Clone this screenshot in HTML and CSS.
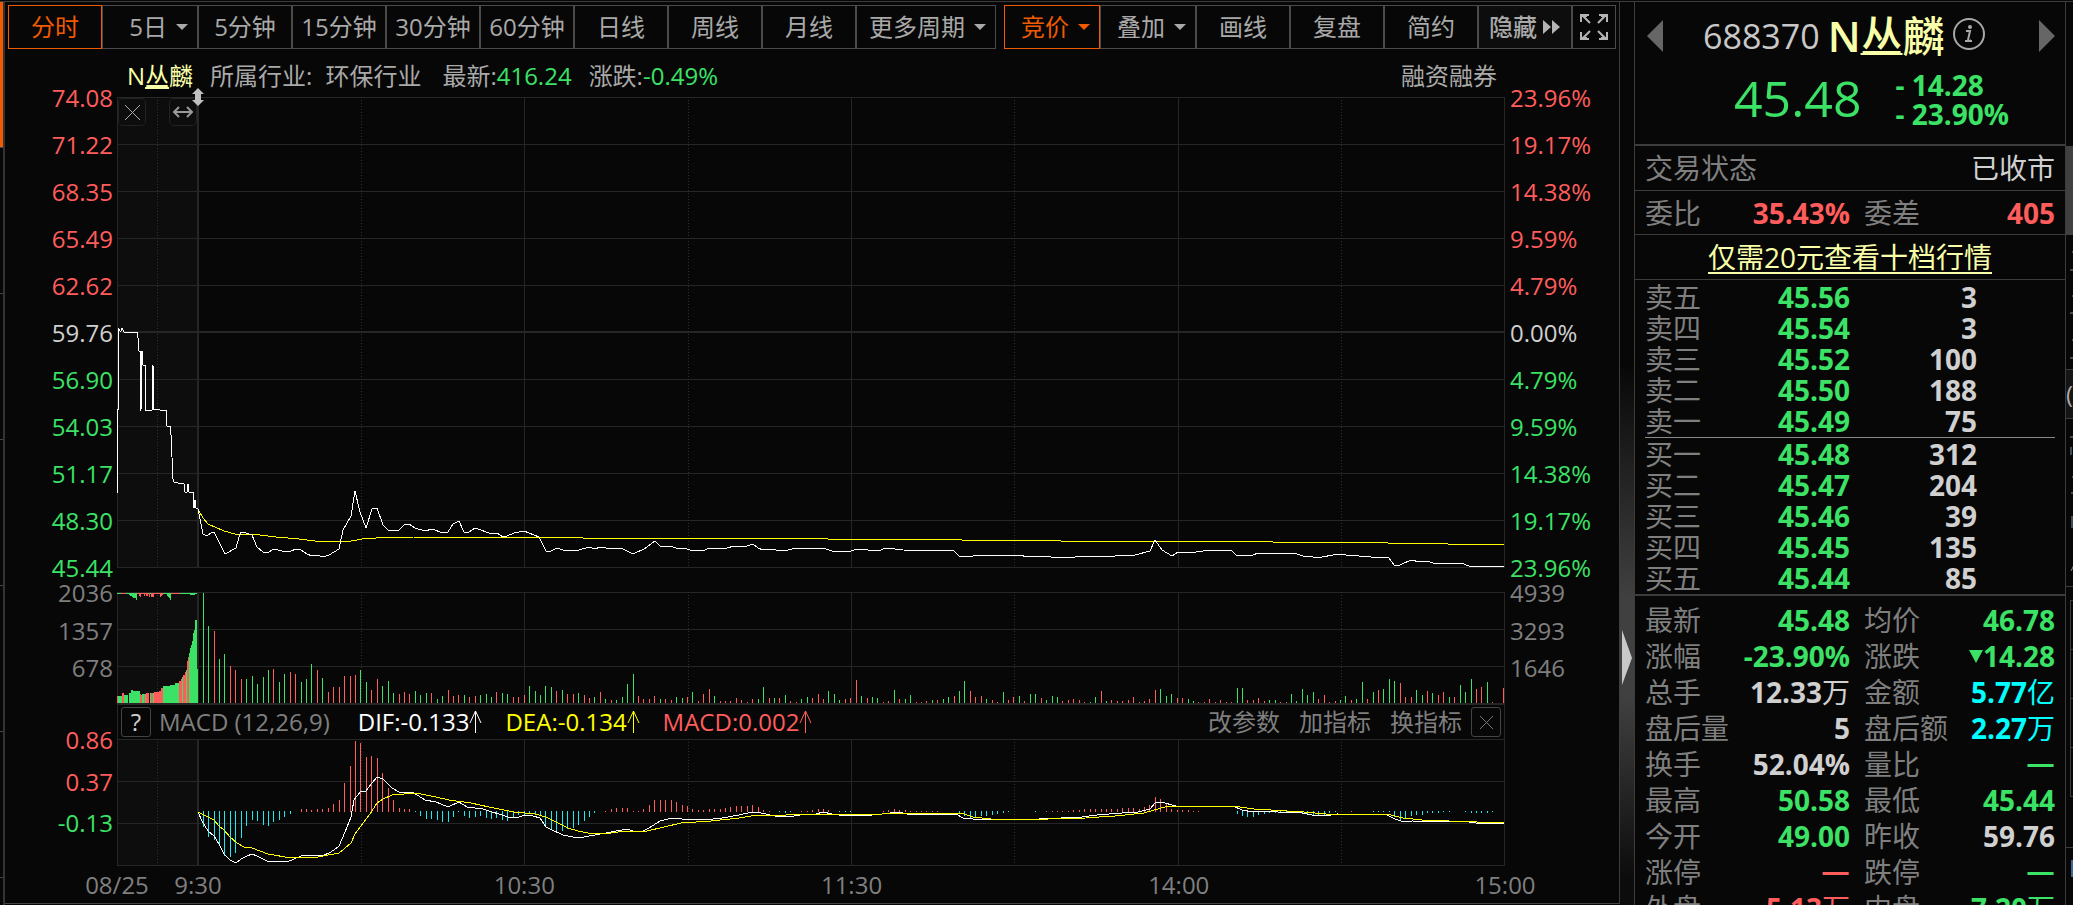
FILE: index.html
```html
<!DOCTYPE html>
<html lang="zh-CN">
<head>
  <meta charset="UTF-8">
  <meta name="viewport" content="width=device-width, initial-scale=1.0">
  <title>N丛麟 688370 分时</title>
  <link rel="stylesheet" href="styles.css">
</head>
<body>

<div class="app">
  <div class="nav-strip">
    <span class="active"></span><span></span><span></span><span></span><span></span><span></span><span></span>
  </div>

  <main class="main">
    <div class="toolbar">
      <button class="btn active">分时</button>
      <button class="btn btn-menu">5日<i class="caret"></i></button>
      <button class="btn">5分钟</button>
      <button class="btn">15分钟</button>
      <button class="btn">30分钟</button>
      <button class="btn">60分钟</button>
      <button class="btn">日线</button>
      <button class="btn">周线</button>
      <button class="btn">月线</button>
      <button class="btn btn-menu btn-wide">更多周期<i class="caret"></i></button>
      <button class="btn btn-menu btn-split active">竞价<i class="caret"></i></button>
      <button class="btn btn-menu">叠加<i class="caret"></i></button>
      <button class="btn">画线</button>
      <button class="btn">复盘</button>
      <button class="btn">简约</button>
      <button class="btn btn-hide">隐藏
        <svg width="18" height="14" viewBox="0 0 18 14"><path d="M0 0l8 7-8 7zM9 0l8 7-8 7z" fill="#b4b4b4"/></svg>
      </button>
      <button class="btn btn-icon" aria-label="全屏">
        <svg width="28" height="28" viewBox="0 0 28 28" fill="none" stroke="#b4b4b4" stroke-width="2">
          <path d="M1 9V2h8M2 2l8 8M19 2h8v7M26 2l-8 8M1 19v7h8M2 26l8-8M27 19v7h-8M26 26l-8-8"/>
          <path d="M1 3h6M21 3h6M1 25h6M21 25h6"/>
        </svg>
      </button>
    </div>

    <div class="info">
      <span class="info-name">N<u>丛</u>麟</span>
      <span>所属行业:</span>
      <span class="info-sector">环保行业</span>
      <span>最新:<b class="down">416.24</b></span>
      <span>涨跌:<b class="down">-0.49%</b></span>
      <span class="info-tag">融资融券</span>
    </div>

    <div class="chart">
      <div class="axis axis-left">
        <span class="up">74.08</span><span class="up">71.22</span><span class="up">68.35</span><span class="up">65.49</span><span class="up">62.62</span><span class="flat">59.76</span><span class="down">56.90</span><span class="down">54.03</span><span class="down">51.17</span><span class="down">48.30</span><span class="down">45.44</span>
      </div>
      <div class="plot">
        <svg id="price" viewBox="0 0 1388 471" preserveAspectRatio="none"></svg>
        <button class="tool tool-close" aria-label="关闭竞价">
          <svg width="17" height="17" viewBox="0 0 17 17"><path d="M1 1l15 15M16 1L1 16" stroke="#aaa"/></svg>
        </button>
        <button class="tool tool-width" aria-label="调整宽度">
          <svg width="22" height="12" viewBox="0 0 22 12" fill="none" stroke="#999" stroke-width="2"><path d="M2 6h18M7 1L2 6l5 5M15 1l5 5-5 5"/></svg>
        </button>
        <svg class="drag" width="12" height="18" viewBox="0 0 12 18"><path d="M6 0l6 6H9v6h3l-6 6-6-6h3V6H0z"/></svg>
      </div>
      <div class="axis axis-right">
        <span class="up">23.96%</span><span class="up">19.17%</span><span class="up">14.38%</span><span class="up">9.59%</span><span class="up">4.79%</span><span class="flat">0.00%</span><span class="down">4.79%</span><span class="down">9.59%</span><span class="down">14.38%</span><span class="down">19.17%</span><span class="down">23.96%</span>
      </div>

      <div class="axis axis-left axis-volume"><span>2036</span><span>1357</span><span>678</span></div>
      <div class="plot plot-volume"><svg id="volume" viewBox="0 0 1388 113" preserveAspectRatio="none"></svg></div>
      <div class="axis axis-right axis-volume"><span>4939</span><span>3293</span><span>1646</span></div>

      <div class="indicator">
        <button class="box" aria-label="指标说明">?</button>
        <span class="ind-name">MACD (12,26,9)</span>
        <span class="ind-value dif">DIF:-0.133<svg width="13" height="24" viewBox="0 0 13 24"><path d="M6.500 1v22M6.500 1L1 13M6.500 1L12 13"/></svg></span>
        <span class="ind-value dea">DEA:-0.134<svg width="13" height="24" viewBox="0 0 13 24"><path d="M6.500 1v22M6.500 1L1 13M6.500 1L12 13"/></svg></span>
        <span class="ind-value macd">MACD:0.002<svg width="13" height="24" viewBox="0 0 13 24"><path d="M6.500 1v22M6.500 1L1 13M6.500 1L12 13"/></svg></span>
        <div class="ind-actions">
          <button>改参数</button>
          <button>加指标</button>
          <button>换指标</button>
        </div>
        <button class="box" aria-label="关闭指标">
          <svg width="15" height="15" viewBox="0 0 15 15"><path d="M1 1l13 13M14 1L1 14" stroke="#777"/></svg>
        </button>
      </div>

      <div class="axis axis-left axis-macd"><span class="up">0.86</span><span class="up">0.37</span><span class="down">-0.13</span></div>
      <div class="plot plot-macd"><svg id="macd" viewBox="0 0 1388 127" preserveAspectRatio="none"></svg></div>

      <div class="times">
        <span>08/25</span><span>9:30</span><span>10:30</span><span>11:30</span><span>14:00</span><span>15:00</span>
      </div>
    </div>
  </main>

  <div class="splitter">
    <svg width="10" height="55" viewBox="0 0 10 55"><path d="M0 0l10 28L0 55z" fill="#c8c8c8"/></svg>
  </div>

  <aside class="side">
    <header class="quote">
      <div class="quote-title">
        <button class="step" aria-label="上一只"><svg width="16" height="32" viewBox="0 0 16 32"><path d="M16 0v32L0 16z"/></svg></button>
        <span class="code">688370</span>
        <span class="name"><b>N</b><u>丛</u>麟</span>
        <svg class="info-icon" width="32" height="32" viewBox="0 0 32 32" fill="none" stroke="#a8a8a8">
          <circle cx="16" cy="16" r="15" stroke-width="2"/>
          <path d="M13 13h4l-2 9q0 2 3 0M12 23h7" stroke-width="2"/>
          <circle cx="17" cy="9" r="1" stroke-width="2"/>
        </svg>
        <button class="step step-next" aria-label="下一只"><svg width="16" height="32" viewBox="0 0 16 32"><path d="M0 0v32l16-16z"/></svg></button>
      </div>
      <div class="quote-price down">
        <span class="last">45.48</span>
        <span class="change"><span>- 14.28</span><span>- 23.90%</span></span>
      </div>
    </header>

    <div class="line"><span>交易状态</span><span class="status">已收市</span></div>
    <table class="stats ratio">
      <tr><th>委比</th><td class="up">35.43%</td><th>委差</th><td class="up">405</td></tr>
    </table>
    <div class="line promo"><a href="#">仅需20元查看十档行情</a></div>

    <table class="book">
      <tbody>
        <tr><th>卖五</th><td class="down">45.56</td><td>3</td><td></td></tr>
        <tr><th>卖四</th><td class="down">45.54</td><td>3</td><td></td></tr>
        <tr><th>卖三</th><td class="down">45.52</td><td>100</td><td></td></tr>
        <tr><th>卖二</th><td class="down">45.50</td><td>188</td><td></td></tr>
        <tr><th>卖一</th><td class="down">45.49</td><td>75</td><td></td></tr>
      </tbody>
    </table>
    <div class="book-buy">
      <table class="book">
        <tbody>
          <tr><th>买一</th><td class="down">45.48</td><td>312</td><td></td></tr>
          <tr><th>买二</th><td class="down">45.47</td><td>204</td><td></td></tr>
          <tr><th>买三</th><td class="down">45.46</td><td>39</td><td></td></tr>
          <tr><th>买四</th><td class="down">45.45</td><td>135</td><td></td></tr>
          <tr><th>买五</th><td class="down">45.44</td><td>85</td><td></td></tr>
        </tbody>
      </table>
    </div>

    <div class="detail">
      <table class="stats">
        <tr><th>最新</th><td class="down">45.48</td><th>均价</th><td class="down">46.78</td></tr>
        <tr><th>涨幅</th><td class="down">-23.90%</td><th>涨跌</th><td class="down"><i class="fall"></i>14.28</td></tr>
        <tr><th>总手</th><td>12.33<em>万</em></td><th>金额</th><td class="money">5.77<em>亿</em></td></tr>
        <tr><th>盘后量</th><td>5</td><th>盘后额</th><td class="money">2.27<em>万</em></td></tr>
        <tr><th>换手</th><td>52.04%</td><th>量比</th><td class="down"><em class="dash">—</em></td></tr>
        <tr><th>最高</th><td class="down">50.58</td><th>最低</th><td class="down">45.44</td></tr>
        <tr><th>今开</th><td class="down">49.00</td><th>昨收</th><td>59.76</td></tr>
        <tr><th>涨停</th><td class="up"><em class="dash">—</em></td><th>跌停</th><td class="down"><em class="dash">—</em></td></tr>
        <tr><th>外盘</th><td class="up">5.13<em>万</em></td><th>内盘</th><td class="down">7.20<em>万</em></td></tr>
      </table>
    </div>
  </aside>

  <div class="edge">
    <div class="thumb"></div>
    <div class="edge-list">
      <svg width="4" height="134" viewBox="0 0 4 134" stroke="#7d8ea3" fill="none"><path d="M2 17h2M0 35h4M2 61h2M0 78h4M2 105h2M0 123h4"/></svg>
    </div>
    <div class="edge-tab">(</div>
    <div class="edge-list edge-more">
      <svg width="4" height="167" viewBox="0 0 4 167" stroke="#7d8ea3" fill="none"><path d="M0 18h4M1 28v8M2 58h2M1 74h3M2 97v12M4 146l-3 6"/></svg>
    </div>
    <div class="edge-cells"><span></span><span></span><span></span><span></span></div>
    <div class="edge-foot"></div>
  </div>
</div>

<script src="chart.js"></script>
</body>
</html>
```
FILE: styles.css
```css
* {
  box-sizing: border-box;
}

body {
  margin: 0;
  background: #070707;
  color: #a9a9a9;
  font-family: "Open Sans", "Noto Sans CJK SC", sans-serif;
  font-size: 24px;
  line-height: 30px;
  overflow: hidden;
}

button {
  padding: 0;
  border: 0;
  background: none;
  color: inherit;
  font: inherit;
  cursor: pointer;
}

svg {
  display: block;
}

.up { color: #ff5c5c; }
.down { color: #3be266; }
.flat { color: #d0d0d0; }

.app {
  display: flex;
  height: calc(100vh - 1px);
  margin-top: 1px;
  border-top: 1px solid #3c3c3c;
}

/* left tabs, collapsed */
.nav-strip {
  display: flex;
  flex-direction: column;
  flex: none;
  width: 5px;
  overflow: hidden;
  border-right: 2px solid #333;
}

.nav-strip span {
  flex: none;
  height: 146px;
  border-bottom: 1px solid #444;
}

.nav-strip .active {
  background: #f05a00;
}

.main {
  display: flex;
  flex-direction: column;
  flex: 1;
  min-width: 0;
  margin-bottom: 1px;
  border-right: 1px solid #3c3c3c;
  border-bottom: 1px solid #444;
}

/* toolbar */
.toolbar {
  display: flex;
  flex: none;
  padding: 3px 3px 0;
}

.btn {
  display: flex;
  align-items: center;
  justify-content: center;
  flex: none;
  width: 94px;
  height: 44px;
  border: 1px solid #4a4a4a;
  white-space: nowrap;
}

.btn.active {
  border-color: #f05a00;
  color: #f05a00;
}

.btn-menu {
  justify-content: flex-end;
  width: 96px;
  padding-right: 9px;
}

.btn-wide { width: 140px; }
.btn-split { margin-left: 8px; }
.btn-icon { width: 44px; }

.btn-hide {
  gap: 6px;
  background: #0d0d0d;
  font-weight: 500;
}

.caret {
  margin-left: 9px;
  border: 6px solid transparent;
  border-top: 6px solid currentColor;
  border-bottom: 0;
}

.info {
  display: flex;
  flex: none;
  gap: 17px;
  height: 48px;
  padding: 12px 122px 0 122px;
  white-space: nowrap;
}

.info b {
  font-weight: 400;
}

.info-name { color: #f8ffa8; }
.info-sector { margin-left: -4px; margin-right: 4px; }
.info-tag { margin-left: auto; }

/* chart */
.chart {
  display: grid;
  flex: 1;
  grid-template-columns: 112px 1fr 114px;
  grid-template-rows: minmax(200px, 1fr) 24px 113px 34px 127px 37px;
}

.axis {
  display: flex;
  flex-direction: column;
  justify-content: space-between;
  margin: -11px 0 -12px;
  color: #7f7f7f;
  line-height: 24px;
}

.axis-left {
  grid-column: 1;
  padding-right: 4px;
  text-align: right;
}

.axis-right {
  grid-column: 3;
  padding-left: 5px;
}

.axis-volume {
  grid-row: 3;
  margin-bottom: 25px;
}

.axis-macd {
  grid-row: 5;
  margin-bottom: 31px;
}

.plot {
  grid-column: 2;
  position: relative;
  min-height: 0;
}

.plot > svg:first-child {
  width: 100%;
  height: 100%;
}

.plot-volume { grid-row: 3; }
.plot-macd { grid-row: 5; }

.plot path {
  fill: none;
  shape-rendering: crispEdges;
  vector-effect: non-scaling-stroke;
}

.plot .tool path,
.plot .drag path {
  shape-rendering: auto;
}

.plot .drag path { fill: #c0c0c0; }

.g-auction { fill: #0d0d0d; }
.g-line { stroke: #262626; }
.g-bold { stroke: #262626; stroke-width: 2; }
.g-dot { stroke: #303030; stroke-dasharray: 1 2; }
.s-white { stroke: #fff; }
.s-yellow { stroke: #ff0; }
.s-up { stroke: #ff5c5c; }
.s-down { stroke: #3be266; }
.s-cyan { stroke: #1fe9f0; }

.tool {
  position: absolute;
  top: 1px;
  display: flex;
  align-items: center;
  justify-content: center;
  width: 28px;
  height: 28px;
  border: 1px solid #222;
  border-radius: 5px;
}

.tool-close { left: 1px; }
.tool-width { left: 52px; }

.drag {
  position: absolute;
  top: -9px;
  left: 75px;
}

.indicator {
  grid-column: 2;
  grid-row: 4;
  display: flex;
  align-items: center;
  padding: 0 3px;
  border: 1px solid #262626;
  border-width: 0 1px;
  white-space: nowrap;
}

.box {
  display: flex;
  align-items: center;
  justify-content: center;
  flex: none;
  width: 30px;
  height: 30px;
  border: 1px solid #444;
  border-radius: 3px;
  color: #d0d0d0;
}

.ind-name {
  margin: 0 28px 0 8px;
  color: #7f7f7f;
}

.ind-value {
  display: flex;
  align-items: center;
  margin-right: 23px;
}

.ind-value path {
  fill: none;
  stroke: currentColor;
}

.dif { color: #fff; }
.dea { color: #ff0; }
.macd { color: #ff5c5c; }

.ind-actions {
  display: flex;
  gap: 19px;
  margin: 0 9px 0 auto;
  color: #7f7f7f;
}

.times {
  grid-column: 2;
  grid-row: 6;
  display: grid;
  grid-template-columns: 81fr 326fr 327fr 327fr 326fr 0;
  align-items: center;
  color: #7f7f7f;
}

/* each label is centred on the start of its column */
.times span {
  width: 80px;
  margin-left: -40px;
  text-align: center;
}

.splitter {
  flex: none;
  width: 14px;
  padding: 628px 0 0 2px;
  background: linear-gradient(#070707 40%, #404040 66%, #404040 77%, #0c0c0c 97%);
}

/* quote panel */
.side {
  flex: none;
  width: 432px;
  overflow: hidden;
  border: 1px solid #3c3c3c;
  border-width: 0 1px;
  font-size: 28px;
}

.quote {
  height: 144px;
  border-bottom: 2px solid #3c3c3c;
}

.quote-title {
  display: flex;
  align-items: center;
  height: 66px;
  padding: 2px 10px 0 12px;
}

.step path { fill: #666; }
.step-next { margin-left: auto; }

.code {
  margin-left: 40px;
  color: #c8c8c8;
  font-size: 34px;
}

.name {
  margin-left: 8px;
  color: #f8ffa8;
  font-size: 42px;
  font-weight: 500;
}

.name b {
  font-weight: 600;
}

.name u {
  text-decoration-thickness: 2px;
}

.info-icon { margin: -4px 0 0 8px; }

.quote-price {
  display: flex;
  align-items: center;
  height: 64px;
  padding-left: 99px;
}

.last {
  padding-bottom: 4px;
  font-size: 50px;
  font-weight: 500;
}

.change {
  display: flex;
  flex-direction: column;
  margin-left: 34px;
  font-weight: 700;
  line-height: 29px;
}

.line {
  display: flex;
  align-items: center;
  justify-content: space-between;
  height: 45px;
  padding: 0 10px;
  border-bottom: 1px solid #3c3c3c;
  color: #7f7f7f;
}

.status { color: #d0d0d0; }

.promo {
  justify-content: center;
}

.promo a {
  color: #f8ffa8;
  text-underline-offset: 4px;
  text-decoration-thickness: 2px;
}

table {
  width: 100%;
  border-collapse: collapse;
  table-layout: fixed;
}

th, td {
  padding: 0;
  white-space: nowrap;
}

th {
  color: #7f7f7f;
  font-weight: 400;
  text-align: left;
}

td {
  font-weight: 700;
  text-align: right;
}

td:not([class]) { color: #d0d0d0; }
td.money { color: #0ff; }

td em {
  font-style: normal;
  font-weight: 400;
}

td .dash {
  font-family: "Noto Sans CJK SC", sans-serif;
  font-size: 32px;
  font-weight: 700;
  line-height: 28px;
}

.stats th:nth-child(1) { width: 21%; }
.stats td:nth-child(2) { width: 29%; }
.stats th:nth-child(3) { width: 24%; padding-left: 14px; }

.ratio {
  border-collapse: separate;
  border-spacing: 0;
  height: 44px;
  padding: 0 10px;
  border-bottom: 1px solid #3c3c3c;
}

.book {
  width: calc(100% - 20px);
  margin: 2px 10px 0;
  line-height: 31px;
}

.book th { width: 21%; }
.book td:nth-child(2) { width: 29%; }
.book td:nth-child(3) { width: 31%; }

.book-buy {
  margin: 0 10px;
  border-top: 1px solid #888;
}

.book-buy .book {
  width: 100%;
  margin: 1px 0 0;
}

.detail {
  padding: 6px 10px 0;
  border-top: 2px solid #3c3c3c;
  line-height: 36px;
}

.detail tr {
  height: 36px;
}

.fall {
  display: inline-block;
  border: 7px solid transparent;
  border-top: 13px solid currentColor;
  border-bottom: 0;
  vertical-align: 4px;
}

/* right edge, next panel cut off by the window */
.edge {
  flex: none;
  width: 7px;
  overflow: hidden;
}

.thumb {
  height: 89px;
  margin-top: 144px;
  background: #404040;
}

.edge-list {
  height: 134px;
  padding-left: 4px;
}

.edge-tab {
  height: 50px;
  border: 1px solid #3c3c3c;
  border-width: 1px 0;
  background: #151515;
  line-height: 48px;
}

.edge-more {
  height: 168px;
  border-bottom: 1px solid #3c3c3c;
}

.edge-cells {
  margin: 13px 0 0 4px;
  border: 1px solid #3c3c3c;
  border-width: 1px 0 0 1px;
}

.edge-cells span {
  display: block;
  height: 49px;
  border-bottom: 1px solid #3c3c3c;
}

.edge-foot {
  height: 60px;
  margin-top: 50px;
  border-top: 1px solid #3c3c3c;
}

.edge-foot::before {
  content: "";
  display: block;
  width: 2px;
  height: 17px;
  margin: 12px 0 0 5px;
  background: #3f6695;
}
```
FILE: chart.js
```js
const NS = 'http://www.w3.org/2000/svg';
const OPEN_X = 81;     // 9:30
const END_X = 1387;    // 15:00
const MINUTES = 240;

const price = document.getElementById('price');
const volume = document.getElementById('volume');
const macd = document.getElementById('macd');

function path(svg, cls, d) {
  const el = document.createElementNS(NS, 'path');
  el.setAttribute('class', cls);
  el.setAttribute('d', d);
  svg.appendChild(el);
}

function minuteX(i) {
  return Math.floor(OPEN_X + i * (END_X - OPEN_X) / MINUTES - 0.3) + 0.5;
}

function grid(svg, height, rows, boldRow) {
  const bg = document.createElementNS(NS, 'rect');
  bg.setAttribute('class', 'g-auction');
  bg.setAttribute('width', OPEN_X);
  bg.setAttribute('height', height);
  svg.appendChild(bg);

  path(svg, 'g-line', rows.map(y => `M0 ${y + 0.5}H1388`).join(''));
  if (boldRow) path(svg, 'g-bold', `M0 ${boldRow}H1388`);
  path(svg, 'g-line', [0, 407, 734, 1061, 1387].map(x => `M${x + 0.5} 0V${height}`).join(''));
  path(svg, 'g-dot', [40, 244, 571, 897, 1224].map(x => `M${x + 0.5} 0V${height}`).join(''));
  path(svg, 'g-bold', `M${OPEN_X} 0V${height}`);
}

function line(svg, cls, points) {
  path(svg, cls, 'M' + points.trim().split(/\s+/).join('L'));
}

// "34g" -> green bar 34 high
function volumeBars(data) {
  let up = '', down = '';
  data.trim().split(/\s+/).forEach((v, i) => {
    const bar = `M${minuteX(i)} 111v-${parseInt(v, 10)}`;
    if (v.endsWith('r')) up += bar; else down += bar;
  });
  path(volume, 's-up', up);
  path(volume, 's-down', down);
}

// [columns, height, colour] runs, one column per pixel
function auctionBars(runs, base, dir) {
  let x = 0, up = '', down = '';
  runs.forEach(([n, h, c]) => {
    for (let i = 0; i < n; i++, x++) {
      const bar = `M${x + 0.5} ${base}v${dir * h}`;
      if (c === 'r') up += bar; else down += bar;
    }
  });
  path(volume, 's-up', up);
  path(volume, 's-down', down);
}

grid(price, 471, [0, 47, 94, 141, 188, 282, 329, 376, 423, 470], 235);
line(price, 's-yellow', `81,412 86,421 91,427 107,434 118,437 143,438 159,440 182,442 198,444 229,445
  245,442 259,441 297,440 464,440 466,441 709,441 711,442 843,442 845,443 942,443 944,444 1154,444
  1156,445 1269,445 1271,446 1329,446 1331,447 1384,447 1387,448`);
line(price, 's-white', `0.5,396 0.5,312 1,312 1,231 3,234 4,234 5,231 7,235 20,235 21,241 22,254 23,254 23,313
  24,313 25,254 26,268 28,268 28,313 35,313 36,268 37,312 42,312 43,313 49,313 50,329 53,329 54,338
  56,382 57,385 61,386 67,387 68,395 70,395 71,387 72,395 76,395 77,411 78,403 79,411 81,412
  86,437 90,439 94,436 97,435 108,457 119,451 122,440 124,435 129,436 135,438 140,450 146,455
  150,456 157,452 165,454 174,454 179,452 184,453 190,457 195,459 200,458 206,460 212,458 222,452
  226,433 234,419 238,394 243,415 249,431 255,412 260,411 266,428 271,433 277,434 282,433 287,428
  292,427 298,431 308,434 315,432 326,436 331,435 336,427 342,424 347,435 352,435 358,431 372,436
  380,436 386,440 390,439 397,436 407,434 422,440 429,454 434,454 440,451 446,453 462,453 472,450
  478,452 483,450 489,451 506,452 516,457 527,452 538,444 543,449 553,449 559,451 570,452 576,454
  588,453 592,451 610,451 617,449 630,449 636,447 641,451 646,453 651,452 667,454 679,451 685,452
  706,451 715,454 734,454 740,452 761,454 769,451 778,452 786,453 837,454 842,459 847,460 865,458
  869,459 883,458 887,459 899,458 914,460 930,459 934,460 958,460 967,459 979,460 998,459 1018,458
  1033,454 1038,443 1045,453 1055,459 1061,455 1079,455 1086,454 1114,453 1120,459 1136,458 1141,456
  1155,457 1171,456 1180,457 1186,459 1196,460 1205,460 1216,458 1225,457 1229,458 1254,460 1272,461
  1277,468 1283,468 1294,463 1303,465 1310,464 1316,466 1344,466 1352,469 1387,469`);

grid(volume, 113, [0, 37, 74], 112);
auctionBars([
  [1, 7, 'r'], [4, 7, 'g'], [2, 10, 'r'], [4, 8, 'g'], [1, 0, 'g'], [2, 10, 'g'], [2, 13, 'g'], [7, 12, 'g'],
  [1, 9, 'r'], [1, 8, 'r'], [2, 9, 'g'], [1, 9, 'r'], [1, 9, 'g'], [3, 10, 'r'], [1, 0, 'r'], [1, 10, 'g'],
  [2, 10, 'r'], [1, 10, 'g'], [5, 11, 'r'], [2, 12, 'r'], [2, 15, 'r'], [7, 17, 'g'], [5, 18, 'g'], [4, 20, 'g'],
  [2, 22, 'r'], [1, 24, 'r'], [1, 26, 'g'], [2, 28, 'r'], [1, 31, 'r'], [1, 33, 'g'], [1, 42, 'r'], [1, 46, 'r'],
  [1, 50, 'g'], [1, 55, 'g'], [1, 58, 'g'], [1, 62, 'g'], [1, 70, 'g'], [1, 73, 'g'], [2, 83, 'g']
], 111, -1);
auctionBars([
  [4, 1, 'g'], [5, 1, 'r'], [3, 1, 'g'], [1, 2, 'g'], [2, 3, 'g'], [1, 4, 'g'], [3, 5, 'g'], [1, 7, 'g'],
  [2, 1, 'r'], [1, 3, 'r'], [1, 4, 'r'], [3, 1, 'r'], [1, 3, 'r'], [1, 1, 'r'], [1, 3, 'r'], [1, 3, 'r'],
  [1, 1, 'g'], [1, 4, 'r'], [1, 1, 'g'], [3, 4, 'r'], [6, 1, 'r'], [1, 4, 'r'], [1, 3, 'r'], [1, 2, 'r'],
  [4, 1, 'g'], [1, 3, 'g'], [1, 4, 'g'], [1, 5, 'g'], [1, 7, 'g'], [9, 1, 'r'], [10, 1, 'g'], [5, 2, 'g'], [2, 1, 'g']
], 1, 1);
volumeBars(`
  34g 110g 77g 72r 44g 49g 37r 33r 24r 24g 27g 19g 26g 33g 34r 21g 29g 31r 29r 21g
  24g 39g 33r 25g 11r 16r 16r 27r 27r 28r 33g 21g 13r 24r 17g 22g 10g 9r 11r 9r
  12g 8g 10g 10r 4g 7g 13r 7r 8r 8g 6r 7r 8g 9g 6g 11r 10g 9g 6r 6r
  8r 17g 12g 8g 17g 16g 12r 13g 9r 9r 10g 8r 5r 6g 11r 4g 3r 3g 6g 19g
  29g 7r 4r 4r 7r 4g 4r 3r 6g 5g 6r 11g 2r 9r 14r 7g 2r 2r 2r 5r
  3r 1r 4r 4g 16g 5r 5g 5r 8g 2r 1r 4g 6g 5r 9r 4r 12g 9g 3g 4r
  5r 23r 7g 5r 6g 5g 1r 2r 13g 4r 4g 8g 1r 1r 2r 3g 3r 4g 6g 7r
  12g 22g 12r 6r 7r 4g 3r 1r 11g 3r 6r 7g 2r 9g 9g 5r 3g 7g 6g 2r
  3r 4r 3r 1r 1g 6g 12r 2g 3r 2r 2r 3r 6r 1r 2r 4r 13r 14g 7g 9g
  5r 5r 4g 2g 1r 1r 4r 1r 3r 1r 1r 15g 15g 3r 3r 5r 2r 3g 3g 1r
  1r 9g 2g 14g 8g 11g 4r 8r 1r 2r 3g 7g 3r 4g 21g 4r 11g 13r 14g 24g
  22g 20r 6r 6r 13g 8g 12r 10g 8r 11r 6g 6r 18g 11g 24g 14r 16r 21g 1r 0r 15r`);

// MACD histogram, positive up from the zero line
const hist = [
  0, -16, -26, -29, -35, -45, -46, -42, -27, -15, -9, -10, -14, -15, -11, -9, -6, -3, 0, 3,
  3, 2, 3, 3, 4, 8, 12, 29, 46, 71, 69, 55, 56, 54, 39, 24, 12, 4, 3, 3,
  -1, -5, -8, -8, -9, -11, -11, -6, -1, -5, -7, -6, -5, -7, -8, -7, -9, -10, -7, -4,
  -4, -3, -3, -5, -16, -19, -20, -20, -18, -17, -14, -10, -6, -2, 0, 1, 3, 4, 4, 4,
  1, 1, 3, 7, 12, 12, 12, 12, 10, 7, 6, 3, 2, 2, 3, 3, 3, 4, 5, 6,
  6, 6, 7, 5, 2, 1, 0, -1, -2, -1, 0, 1, 1, 2, 3, 3, 2, 0, -1, -1,
  -1, 0, 0, 0, 0, 0, 1, 2, 3, 2, 2, 1, 1, 1, 1, 1, 1, 0, 0, 0,
  -2, -5, -7, -7, -5, -5, -4, -3, -2, -1, 0, 0, 0, 0, -1, 0, 1, 1, 1, 1,
  1, 2, 2, 3, 3, 3, 3, 3, 3, 3, 4, 4, 4, 3, 5, 7, 15, 13, 9, 3,
  2, 2, 2, 1, 1, 0, 0, 0, 0, 0, 0, -3, -5, -6, -6, -4, -3, -2, -2, -1,
  -1, -1, -2, -3, -3, -4, -4, -4, -2, -1, 0, 0, 1, 0, 0, 0, -1, -1, -1, -1,
  -6, -9, -8, -5, -4, -4, -2, -2, -2, -1, -1, 0, 0, -1, -2, -2, -2, -2, -1, 0, 0
];

grid(macd, 127, [0, 42, 84, 126]);
const bars = sign => hist.map((v, i) => v * sign > 0 ? `M${minuteX(i)} ${sign > 0 ? 73 : 72}v${-v}` : '').join('');
path(macd, 's-up', bars(1));
path(macd, 's-cyan', bars(-1));
line(macd, 's-white', `81,73 85,82 91,92 97,97 102,105 107,115 113,121 119,124 124,120 130,117 135,115 140,117
  150,122 170,123 184,117 207,116 212,114 217,111 222,107 228,93 234,78 237,61 240,57 244,52 249,52
  255,44 260,38 266,40 275,49 282,53 297,54 308,61 319,63 331,68 342,63 350,68 366,70 391,78 402,78
  408,76 416,77 423,79 429,88 435,91 446,96 461,99 478,96 494,93 510,90 516,92 526,92 532,89 543,82
  555,79 565,80 587,81 605,79 622,76 635,73 644,74 658,77 672,78 683,76 699,75 706,73 715,75 730,77
  740,76 746,77 765,75 781,73 790,75 839,75 846,79 856,80 872,81 890,80 922,80 944,79 965,78 980,76
  1005,74 1021,73 1033,70 1038,64 1044,63 1059,67 1116,67 1125,71 1136,73 1152,72 1161,73 1180,73
  1195,76 1214,76 1220,75 1270,76 1278,80 1287,83 1295,82 1352,83 1359,84 1387,84`);
line(macd, 's-yellow', `81,73 91,78 97,81 102,87 107,91 113,98 120,104 127,108 135,109 151,115 174,119 201,118
  222,114 227,110 234,104 238,95 244,87 255,72 260,64 266,60 275,56 299,54 319,58 332,61 354,64 372,68
  397,73 418,75 429,78 437,82 451,89 461,92 471,94 494,94 508,92 530,92 547,88 564,84 594,82 622,79
  640,76 669,76 690,75 765,75 783,74 844,74 856,78 874,80 931,80 969,79 982,78 998,77 1027,74 1037,71
  1048,68 1070,67 1116,67 1137,70 1170,72 1187,73 1209,75 1270,75 1286,79 1305,81 1387,84`);
```
